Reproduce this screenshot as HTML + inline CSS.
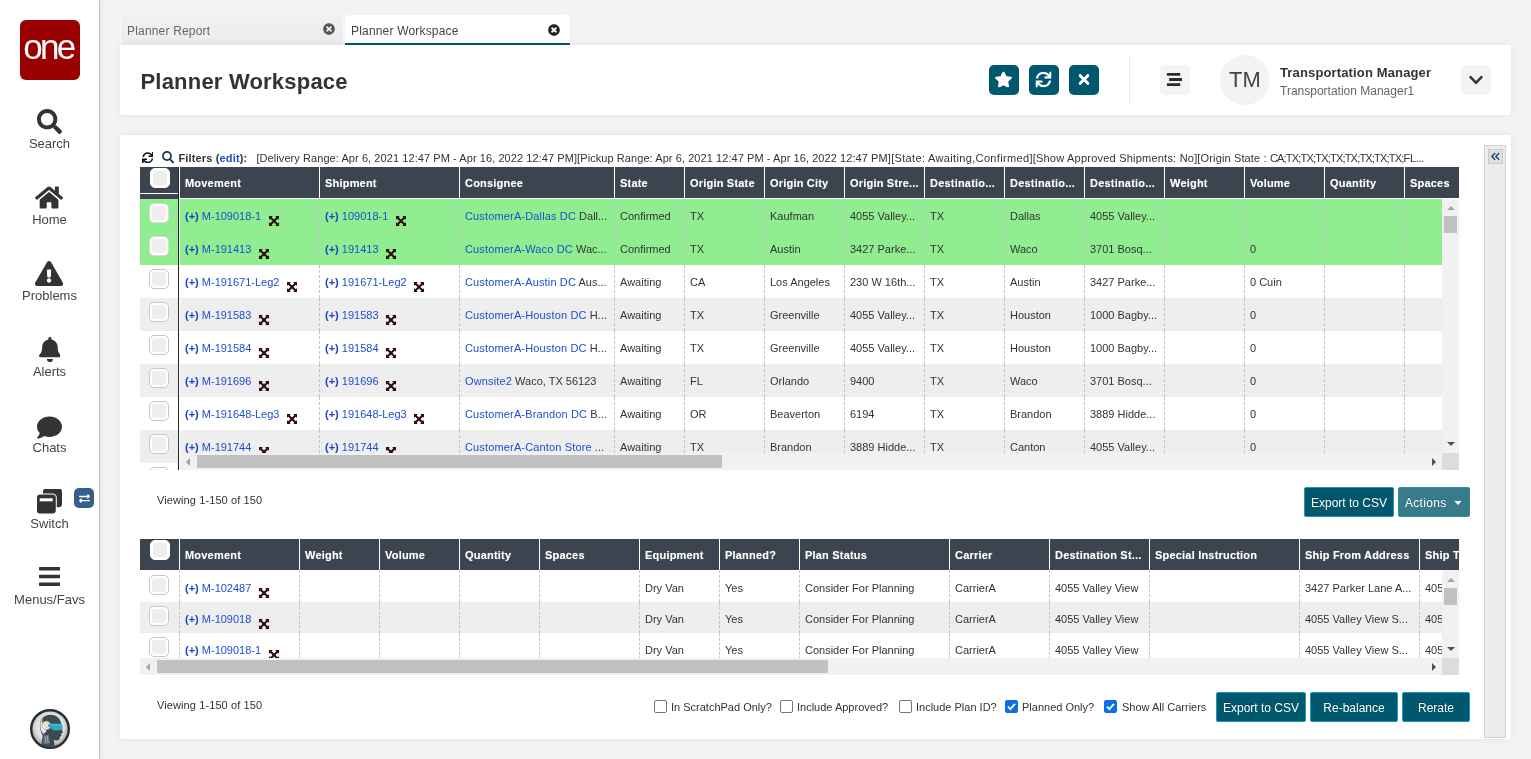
<!DOCTYPE html><html lang="en"><head><meta charset="utf-8"><title>Planner Workspace</title><style>

*{box-sizing:border-box}
html,body{margin:0;padding:0}
body{width:1531px;height:759px;overflow:hidden;background:#f3f3f3;font-family:"Liberation Sans",sans-serif;color:#333;position:relative}
a{color:#1e4ecd;text-decoration:none}
#side,#head,#panel,.tab{will-change:transform}
#side{position:absolute;left:0;top:0;width:100px;height:759px;background:#fff;border-right:1px solid #c4c4c4;box-shadow:2px 0 6px rgba(0,0,0,.06)}
#logo{position:absolute;left:20px;top:20px;width:60px;height:60px;border-radius:6px;background:#990000;color:#fff;font-size:35px;letter-spacing:-2.7px;text-align:center;line-height:54px;text-indent:-3px}
.nav{position:absolute;left:0;width:99px;height:60px;text-align:center}
.nav svg{position:absolute;top:0;left:0;right:0;margin:auto}
.nav span{position:absolute;left:0;right:0;top:27px;font-size:13px;color:#444;line-height:16px}
#badge{position:absolute;left:74px;top:488px;width:20px;height:20px;border-radius:5px;background:#34608a}
#ava{position:absolute;left:30px;top:708.500px}
.tab{position:absolute;top:15px;height:30px;font-size:12px;line-height:30px;color:#666;padding-left:6px;border-radius:5px 5px 0 0;letter-spacing:.18px}
#tab1{left:120px;width:224px;background:linear-gradient(#f1f1f1,#ececec);border:1px solid #f8f8f8;border-bottom:none}
#tab2{left:345px;width:225px;padding-left:6px;padding-top:1px;background:#fff;color:#444;border-bottom:2px solid #00586e}
.tab svg{position:absolute;top:9px}
#tab1 svg{top:7px}
#tab2 svg{top:9px}
#head{position:absolute;left:120px;top:45px;width:1391px;height:70px;background:#fff;box-shadow:0 0 8px rgba(0,0,0,.07);border-radius:0 0 3px 3px}
#title{position:absolute;left:20.500px;top:22px;font-size:22px;font-weight:bold;color:#333;line-height:30px;white-space:nowrap;letter-spacing:.2px}
.hb{position:absolute;top:20px;width:30px;height:30px;border-radius:5px;background:#00586e}
.hb svg{position:absolute;left:0;right:0;top:0;bottom:0;margin:auto}
.gb{background:#f4f4f4}
.hb:not(.gb) svg{transform:translate(-.5px,-.5px)}
#panel{position:absolute;left:120px;top:135px;width:1391px;height:604px;background:#fff;box-shadow:0 0 8px rgba(0,0,0,.07);border-radius:3px}


#panel{font-size:11px}
.abs{position:absolute}
.gh{position:absolute;background:#3c444f;color:#fff;font-weight:bold;font-size:11px;overflow:hidden}
.gh div{position:absolute;top:0;height:100%;padding-left:5px;line-height:33px;border-right:1px solid #fff;white-space:nowrap;overflow:hidden;letter-spacing:.2px;text-shadow:0 0 1px rgba(255,255,255,.4)}
.gb2{position:absolute;overflow:hidden;background:#fff}
.row{position:absolute;left:0;width:100%}
.row.alt{background:#eee}
.row.grn{background:#90ee90}
.row div{position:absolute;top:0;height:100%;padding-left:5px;border-right:1px dashed #c4c4c4;white-space:nowrap;overflow:hidden;color:#333}
.row b{color:#1b3fd0}
.row a.c{letter-spacing:.15px}
.mv{position:relative;top:6px;margin-left:7.500px}
.cb{position:absolute;left:9.200px;width:19.500px;height:19.500px;margin-top:.2px;border:1px solid #c6c6c6;border-radius:5px;background:#fff}
.cb:after{content:"";position:absolute;left:2px;top:2px;right:2px;bottom:2px;background:#eee;border-radius:3px}
.grn .cb{border-color:#d4dcd4}
.hcb{border-color:#fff;left:10px;width:20px;height:20px;margin-top:0}
.btn{position:absolute;height:30px;background:#00586e;border:1px solid #1b98bb;color:#fff;font-size:12px;text-align:center;line-height:28px;padding-top:1px;text-shadow:0 -1px 0 rgba(0,0,0,.25);border-radius:2px;white-space:nowrap}
.sb{position:absolute;background:#f1f1f1}
.th{position:absolute;background:#c1c1c1}
.chk{position:absolute;top:565px;width:13px;height:13px;border:1px solid #767676;border-radius:2px;background:#fff}
.chk.on{background:#0a6fe8;border-color:#0a6fe8}
.lbl{position:absolute;top:564px;line-height:17px;font-size:11px;color:#333;white-space:nowrap}

</style></head><body>
<div id="side"><div id="logo">one</div>
<div class="nav" style="top:108.5px"><svg viewBox="0 0 512 512" width="25" height="25" style="top:0px"><path fill="#333" d="M505 442.7L405.3 343c-4.500-4.500-10.600-7-17-7H372c27.600-35.300 44-79.700 44-128C416 93.100 322.900 0 208 0S0 93.100 0 208s93.100 208 208 208c48.300 0 92.700-16.400 128-44v16.300c0 6.400 2.500 12.500 7 17l99.700 99.700c9.400 9.400 24.600 9.400 33.900 0l28.300-28.300c9.400-9.400 9.400-24.600.100-34zM208 336c-70.700 0-128-57.200-128-128 0-70.700 57.200-128 128-128 70.700 0 128 57.200 128 128 0 70.700-57.200 128-128 128z"/></svg><span>Search</span></div>
<div class="nav" style="top:184.5px"><svg viewBox="0 0 576 512" width="28.1" height="25" style="top:0px"><path fill="#333" d="M280.370 148.260L96 300.110V464a16 16 0 0 0 16 16l112.060-.290a16 16 0 0 0 15.920-16V368a16 16 0 0 1 16-16h64a16 16 0 0 1 16 16v95.640a16 16 0 0 0 16 16.050L464 480a16 16 0 0 0 16-16V300L295.670 148.260a12.190 12.190 0 0 0-15.300 0zM571.600 251.470L488 182.560V44.050a12 12 0 0 0-12-12h-56a12 12 0 0 0-12 12v72.610L318.470 43a48 48 0 0 0-61 0L4.340 251.470a12 12 0 0 0-1.600 16.900l25.500 31A12 12 0 0 0 45.150 301l235.220-193.740a12.190 12.190 0 0 1 15.300 0L530.900 301a12 12 0 0 0 16.900-1.600l25.500-31a12 12 0 0 0-1.700-16.930z"/></svg><span>Home</span></div>
<div class="nav" style="top:260.5px"><svg viewBox="0 0 576 512" width="28.1" height="25" style="top:0px"><path fill="#333" d="M569.517 440.013C587.975 472.007 564.806 512 527.940 512H48.054c-36.937 0-59.999-40.055-41.577-71.987L246.423 23.985c18.467-32.009 64.720-31.951 83.154 0l239.940 416.028zM288 354c-25.405 0-46 20.595-46 46s20.595 46 46 46 46-20.595 46-46-20.595-46-46-46zm-43.673-165.346l7.418 136c.347 6.364 5.609 11.346 11.982 11.346h48.546c6.373 0 11.635-4.982 11.982-11.346l7.418-136c.375-6.874-5.098-12.654-11.982-12.654h-63.383c-6.884 0-12.356 5.780-11.981 12.654z"/></svg><span>Problems</span></div>
<div class="nav" style="top:336.5px"><svg viewBox="0 0 448 512" width="21.9" height="25" style="top:0px"><path fill="#333" d="M224 512c35.320 0 63.970-28.650 63.970-64H160.030c0 35.350 28.650 64 63.970 64zm215.390-149.710c-19.320-20.760-55.470-51.990-55.470-154.290 0-77.700-54.480-139.900-127.940-155.160V32c0-17.670-14.320-32-31.980-32s-31.980 14.330-31.980 32v20.840C118.560 68.100 64.080 130.300 64.080 208c0 102.300-36.150 133.530-55.470 154.290-6 6.450-8.660 14.160-8.610 21.710.110 16.400 12.980 32 32.100 32h383.800c19.120 0 32-15.600 32.100-32 .050-7.550-2.610-15.270-8.610-21.710z"/></svg><span>Alerts</span></div>
<div class="nav" style="top:412.5px"><svg viewBox="0 0 512 512" width="25" height="25" style="top:2.2px"><path fill="#333" d="M256 32C114.600 32 0 125.100 0 240c0 49.600 21.400 95 57 130.700C44.500 421.100 2.700 466 2.200 466.500c-2.200 2.300-2.800 5.700-1.500 8.700S4.800 480 8 480c66.300 0 116-31.800 140.600-51.400 32.700 12.300 69 19.400 107.400 19.400 141.400 0 256-93.100 256-208S397.400 32 256 32z"/></svg><span>Chats</span></div>
<div class="nav" style="top:488.5px"><svg viewBox="0.500 0.700 26 26" width="26" height="26" style="left:0;right:0"><rect x="6.500" y="0" width="19" height="19" rx="3.500" fill="#333"/><rect x="-.700" y="5.300" width="21" height="21" rx="4.200" fill="#fff"/><rect x=".300" y="6.300" width="19" height="19" rx="3.300" fill="#333"/><rect x="3.200" y="10" width="13" height="3" fill="#fff"/></svg><span>Switch</span></div>
<div class="nav" style="top:564.5px"><svg viewBox="0 0 448 512" width="21.9" height="25" style="top:-0.7px"><path fill="#333" d="M16 132h416c8.837 0 16-7.163 16-16V76c0-8.837-7.163-16-16-16H16C7.163 60 0 67.163 0 76v40c0 8.837 7.163 16 16 16zm0 160h416c8.837 0 16-7.163 16-16v-40c0-8.837-7.163-16-16-16H16c-8.837 0-16 7.163-16 16v40c0 8.837 7.163 16 16 16zm0 160h416c8.837 0 16-7.163 16-16v-40c0-8.837-7.163-16-16-16H16c-8.837 0-16 7.163-16 16v40c0 8.837 7.163 16 16 16z"/></svg><span>Menus/Favs</span></div>
<div id="badge"><svg viewBox="0 0 512 512" width="11" height="11" style="position:absolute;left:4.500px;top:4.500px"><path fill="#fff" d="M0 168v-16c0-13.255 10.745-24 24-24h360V80c0-21.367 25.899-32.042 40.971-16.971l80 80c9.372 9.373 9.372 24.569 0 33.941l-80 80C409.956 271.982 384 261.456 384 240v-48H24c-13.255 0-24-10.745-24-24zm488 152H128v-48c0-21.314-25.862-32.080-40.971-16.971l-80 80c-9.372 9.373-9.372 24.569 0 33.941l80 80C102.057 463.997 128 453.437 128 432v-48h360c13.255 0 24-10.745 24-24v-16c0-13.255-10.745-24-24-24z"/></svg></div>
<svg id="ava" viewBox="0 0 40 40" width="40" height="40"><defs><radialGradient id="ag" cx="50%" cy="45%" r="55%"><stop offset="0" stop-color="#fafafa"/><stop offset=".7" stop-color="#dcdcdc"/><stop offset="1" stop-color="#9a9a9a"/></radialGradient><clipPath id="ac"><circle cx="20" cy="20" r="18.300"/></clipPath></defs><circle cx="20" cy="20" r="18.800" fill="url(#ag)" stroke="#262d30" stroke-width="2.400"/><g clip-path="url(#ac)"><path fill="#3c4a52" d="M10 17c-.6-6.500 4-11.300 10.500-11.300 6.300 0 10 4 10.700 9.200l.3 4.600 1.500 4.200-1.800.8.200 2.500-1.300.6-.7 3c-1 1.200-3.400 1-5.600.3l.8 5.600 3 3H9.500l2-5.500 1.200-7.500C11 24 10.200 21 10 17z"/><path fill="#e4eaec" d="M10.300 17c-.2-3.300.8-6 2.600-7.900-.9 2.600-.9 5.300.3 7.600 1.200 2.400 3.300 4 3.300 5.800-1.100.9-2.300 1.500-3.200 2.600C11.500 23 10.500 20 10.300 17z"/><path fill="#5b6a72" d="M13.500 26.500l5.500-1 1.300 9.500h-8z"/><path fill="#26343b" d="M15 27l1 7M17.300 26.600l.8 7.400" stroke="#dfe6e8" stroke-width=".6"/><circle cx="16.400" cy="16.400" r="4.200" fill="#eef2f3" stroke="#b9a777" stroke-width=".8"/><circle cx="16.800" cy="16.400" r="2.100" fill="none" stroke="#c9a75a" stroke-width=".6"/><path fill="#2fa9c6" d="M17.300 16.200l4-1.700 10.400.2c.9 1.900 1 4.300.6 6.400l-8.300.3c-2.300-1.200-4.700-3-6.700-5.200z"/><path fill="#66cfe2" opacity=".6" d="M22 15l9.500.2.300 1.300-10.500-.3z"/></g></svg></div>
<div class="tab" id="tab1">Planner Report<svg viewBox="0 0 512 512" width="12" height="12" style="left:202px"><path fill="#555" d="M256 8C119 8 8 119 8 256s111 248 248 248 248-111 248-248S393 8 256 8zm121.600 313.100c4.700 4.700 4.700 12.300 0 17L338 377.600c-4.700 4.700-12.300 4.700-17 0L256 312l-65.100 65.600c-4.700 4.700-12.300 4.700-17 0L134.400 338c-4.700-4.700-4.700-12.300 0-17l65.600-65-65.600-65.100c-4.700-4.700-4.700-12.300 0-17l39.600-39.600c4.700-4.700 12.300-4.700 17 0l65 65.700 65.100-65.600c4.700-4.700 12.300-4.700 17 0l39.600 39.600c4.700 4.700 4.700 12.300 0 17L312 256l65.600 65.100z"/></svg></div>
<div class="tab" id="tab2">Planner Workspace<svg viewBox="0 0 512 512" width="12" height="12" style="left:203px"><path fill="#222" d="M256 8C119 8 8 119 8 256s111 248 248 248 248-111 248-248S393 8 256 8zm121.600 313.100c4.700 4.700 4.700 12.300 0 17L338 377.600c-4.700 4.700-12.300 4.700-17 0L256 312l-65.100 65.600c-4.700 4.700-12.300 4.700-17 0L134.400 338c-4.700-4.700-4.700-12.300 0-17l65.600-65-65.600-65.100c-4.700-4.700-4.700-12.300 0-17l39.600-39.600c4.700-4.700 12.300-4.700 17 0l65 65.700 65.100-65.600c4.700-4.700 12.300-4.700 17 0l39.600 39.600c4.700 4.700 4.700 12.300 0 17L312 256l65.600 65.100z"/></svg></div>
<div id="head"><div id="title">Planner Workspace</div>
<div class="hb" style="left:869px"><svg viewBox="0 0 576 512" width="18" height="16" style=""><path fill="#fff" d="M259.300 17.800L194 150.200 47.900 171.500c-26.200 3.800-36.700 36.100-17.700 54.600l105.700 103-25 145.500c-4.500 26.300 23.200 46 46.400 33.700L288 439.600l130.700 68.700c23.200 12.200 50.900-7.400 46.400-33.700l-25-145.500 105.700-103c19-18.500 8.500-50.800-17.700-54.600L382 150.200 316.700 17.800c-11.700-23.600-45.600-23.900-57.400 0z"/></svg></div>
<div class="hb" style="left:909px"><svg viewBox="0 0 512 512" width="16" height="16" style=""><path fill="#fff" d="M440.650 12.570l4 82.770A247.160 247.160 0 0 0 255.830 8C134.730 8 33.910 94.920 12.290 209.820A12 12 0 0 0 24.090 224h49.050a12 12 0 0 0 11.670-9.260 175.910 175.910 0 0 1 317-56.940l-101.460-4.860a12 12 0 0 0-12.570 12v47.410a12 12 0 0 0 12 12H500a12 12 0 0 0 12-12V12a12 12 0 0 0-12-12h-47.370a12 12 0 0 0-11.980 12.570zM255.830 432a175.610 175.610 0 0 1-146-77.800l101.800 4.870a12 12 0 0 0 12.570-12v-47.400a12 12 0 0 0-12-12H12a12 12 0 0 0-12 12V500a12 12 0 0 0 12 12h47.350a12 12 0 0 0 12-12.600l-4.150-82.570A247.170 247.170 0 0 0 255.830 504c121.110 0 221.930-86.920 243.550-201.820a12 12 0 0 0-11.800-14.180h-49.050a12 12 0 0 0-11.670 9.260A175.860 175.860 0 0 1 255.830 432z"/></svg></div>
<div class="hb" style="left:949px"><svg viewBox="0 0 352 512" width="11" height="16" style=""><path fill="#fff" d="M242.720 256l100.070-100.070c12.280-12.280 12.280-32.190 0-44.480l-22.240-22.240c-12.280-12.280-32.190-12.280-44.480 0L176 189.280 75.930 89.210c-12.280-12.280-32.190-12.280-44.480 0L9.210 111.450c-12.280 12.280-12.280 32.190 0 44.480L109.280 256 9.210 356.070c-12.280 12.280-12.280 32.190 0 44.480l22.240 22.240c12.280 12.280 32.200 12.280 44.480 0L176 322.720l100.070 100.070c12.280 12.280 32.200 12.280 44.480 0l22.240-22.240c12.280-12.280 12.280-32.190 0-44.480L242.720 256z"/></svg></div>
<div style="position:absolute;left:1009px;top:10px;width:1px;height:50px;background:#eaeaea"></div>
<div class="hb gb" style="left:1040px"><svg viewBox="0 0 30 30" width="30" height="30"><path fill="#2b2b2b" d="M6.900 8.100h13.300v2.700H6.900zM9.200 13.100H22v2.800H9.200zM6.900 18.300h13.300v2.800H6.900z"/></svg></div>
<div style="position:absolute;left:1100px;top:10px;width:50px;height:50px;border-radius:50%;background:#f3f3f3;text-align:center;line-height:50px;font-size:22px;color:#444">TM</div>
<div style="position:absolute;left:1160px;top:20px;font-size:13px;font-weight:bold;color:#333;line-height:16px;white-space:nowrap;letter-spacing:.14px">Transportation Manager</div>
<div style="position:absolute;left:1160px;top:38px;font-size:12px;color:#666;line-height:16px;white-space:nowrap">Transportation Manager1</div>
<div class="hb gb" style="left:1341px"><svg viewBox="0 0 448 512" width="14" height="16" style=""><path fill="#333" d="M207.029 381.476L12.686 187.132c-9.373-9.373-9.373-24.569 0-33.941l22.667-22.667c9.357-9.357 24.522-9.375 33.901-.040L224 284.505l154.745-154.021c9.379-9.335 24.544-9.317 33.901.040l22.667 22.667c9.373 9.373 9.373 24.569 0 33.941L240.971 381.476c-9.373 9.372-24.569 9.372-33.942 0z"/></svg></div>
</div>
<div id="panel">
<svg viewBox="0 0 512 512" width="11.5" height="11.5" style="position:absolute;left:21.80000000000001px;top:16.900000000000006px"><path fill="#111" d="M440.650 12.570l4 82.770A247.160 247.160 0 0 0 255.830 8C134.730 8 33.910 94.920 12.290 209.820A12 12 0 0 0 24.090 224h49.050a12 12 0 0 0 11.670-9.260 175.910 175.910 0 0 1 317-56.940l-101.460-4.860a12 12 0 0 0-12.570 12v47.410a12 12 0 0 0 12 12H500a12 12 0 0 0 12-12V12a12 12 0 0 0-12-12h-47.370a12 12 0 0 0-11.980 12.570zM255.830 432a175.610 175.610 0 0 1-146-77.800l101.800 4.870a12 12 0 0 0 12.570-12v-47.400a12 12 0 0 0-12-12H12a12 12 0 0 0-12 12V500a12 12 0 0 0 12 12h47.350a12 12 0 0 0 12-12.600l-4.150-82.570A247.170 247.170 0 0 0 255.830 504c121.110 0 221.930-86.920 243.550-201.820a12 12 0 0 0-11.800-14.180h-49.050a12 12 0 0 0-11.670 9.260A175.860 175.860 0 0 1 255.830 432z"/></svg>
<svg class="abs" style="left:42px;top:16px" width="13" height="13" viewBox="0 0 13 13"><circle cx="4.950" cy="5" r="4.050" fill="none" stroke="#1b3348" stroke-width="1.700"/><path d="M7.900 8.100 11.100 11.400" stroke="#1b3348" stroke-width="1.900" stroke-linecap="round"/></svg>
<div class="abs" style="left:58.5px;top:15px;line-height:16px;white-space:nowrap;color:#333"><b style="letter-spacing:.15px">Filters (<a href="#">edit</a>):</b> <span style="margin-left:6px" id="ftxt"><span style="letter-spacing:0.073px">[Delivery Range: Apr 6, 2021 12:47 PM - Apr 16, 2022 12:47 PM</span><span style="letter-spacing:0.072px">][Pickup Range: Apr 6, 2021 12:47 PM - Apr 16, 2022 12:47 PM</span><span style="letter-spacing:0.34px">][State: Awaiting,Confirmed</span><span style="letter-spacing:0.22px">][Show Approved Shipments: No</span><span style="letter-spacing:0.14px">][Origin State : </span><span style="letter-spacing:-0.8px">CA;TX;TX;TX;TX;TX;TX;TX;TX;</span><span style="letter-spacing:-0.3px">FL...</span></span></div>
<div class="abs" style="left:20px;top:32px;width:38px;height:32px;background:#3c444f"><div class="cb hcb" style="top:1px"></div><div class="abs" style="left:0;top:26px;width:38px;height:1px;background:#fff"></div></div>
<div class="gb2" style="left:20px;top:64px;width:38px;height:271px">
<div class="row grn" style="top:0px;height:33px"><span class="cb" style="top:4px"></span></div>
<div class="row grn" style="top:33px;height:33px"><span class="cb" style="top:4px"></span></div>
<div class="row " style="top:66px;height:33px"><span class="cb" style="top:4px"></span></div>
<div class="row alt" style="top:99px;height:33px"><span class="cb" style="top:4px"></span></div>
<div class="row " style="top:132px;height:33px"><span class="cb" style="top:4px"></span></div>
<div class="row alt" style="top:165px;height:33px"><span class="cb" style="top:4px"></span></div>
<div class="row " style="top:198px;height:33px"><span class="cb" style="top:4px"></span></div>
<div class="row alt" style="top:231px;height:33px"><span class="cb" style="top:4px"></span></div>
<div class="row " style="top:264px;height:33px"><span class="cb" style="top:4px"></span></div>
</div>
<div class="abs" style="left:58px;top:32px;width:1px;height:303px;background:#222"></div>
<div class="gh" style="left:60px;top:32px;width:1279px;height:31px">
<div style="left:0px;width:140px">Movement</div>
<div style="left:140px;width:140px">Shipment</div>
<div style="left:280px;width:155px">Consignee</div>
<div style="left:435px;width:70px">State</div>
<div style="left:505px;width:80px">Origin State</div>
<div style="left:585px;width:80px">Origin City</div>
<div style="left:665px;width:80px">Origin Stre...</div>
<div style="left:745px;width:80px">Destinatio...</div>
<div style="left:825px;width:80px">Destinatio...</div>
<div style="left:905px;width:80px">Destinatio...</div>
<div style="left:985px;width:80px">Weight</div>
<div style="left:1065px;width:80px">Volume</div>
<div style="left:1145px;width:80px">Quantity</div>
<div style="left:1225px;width:80px">Spaces</div>
</div>
<div class="gb2" style="left:60px;top:64px;width:1262px;height:254px">
<div class="row grn" style="top:0px;height:33px;line-height:35px">
<div style="left:0px;width:140px"><a href="#"><b>(+)</b> M-109018-1</a><svg class="mv" viewBox="0 0 11 11" width="10" height="10"><path fill="#2a0d0d" d="M0 0h4.200L2.900 1.300 5.500 3.900 8.100 1.300 6.800 0H11v4.200L9.700 2.900 7.100 5.500 9.700 8.100 11 6.800V11H6.800l1.300-1.300L5.500 7.100 2.900 9.700 4.200 11H0V6.800l1.300 1.300L3.900 5.500 1.300 2.900 0 4.200z"/></svg></div>
<div style="left:140px;width:140px"><a href="#"><b>(+)</b> 109018-1</a><svg class="mv" viewBox="0 0 11 11" width="10" height="10"><path fill="#2a0d0d" d="M0 0h4.200L2.900 1.300 5.500 3.900 8.100 1.300 6.800 0H11v4.200L9.700 2.900 7.100 5.500 9.700 8.100 11 6.800V11H6.800l1.300-1.300L5.500 7.100 2.900 9.700 4.200 11H0V6.800l1.300 1.300L3.900 5.500 1.300 2.900 0 4.200z"/></svg></div>
<div style="left:280px;width:155px"><a class="c" href="#">CustomerA-Dallas DC</a> Dall...</div>
<div style="left:435px;width:70px">Confirmed</div>
<div style="left:505px;width:80px">TX</div>
<div style="left:585px;width:80px">Kaufman</div>
<div style="left:665px;width:80px">4055 Valley...</div>
<div style="left:745px;width:80px">TX</div>
<div style="left:825px;width:80px">Dallas</div>
<div style="left:905px;width:80px">4055 Valley...</div>
<div style="left:985px;width:80px"></div>
<div style="left:1065px;width:80px"></div>
<div style="left:1145px;width:80px"></div>
<div style="left:1225px;width:80px"></div>
</div>
<div class="row grn" style="top:33px;height:33px;line-height:35px">
<div style="left:0px;width:140px"><a href="#"><b>(+)</b> M-191413</a><svg class="mv" viewBox="0 0 11 11" width="10" height="10"><path fill="#2a0d0d" d="M0 0h4.200L2.900 1.300 5.500 3.900 8.100 1.300 6.800 0H11v4.200L9.700 2.900 7.100 5.500 9.700 8.100 11 6.800V11H6.800l1.300-1.300L5.500 7.100 2.900 9.700 4.200 11H0V6.800l1.300 1.300L3.900 5.500 1.300 2.900 0 4.200z"/></svg></div>
<div style="left:140px;width:140px"><a href="#"><b>(+)</b> 191413</a><svg class="mv" viewBox="0 0 11 11" width="10" height="10"><path fill="#2a0d0d" d="M0 0h4.200L2.900 1.300 5.500 3.900 8.100 1.300 6.800 0H11v4.200L9.700 2.900 7.100 5.500 9.700 8.100 11 6.800V11H6.800l1.300-1.300L5.500 7.100 2.900 9.700 4.200 11H0V6.800l1.300 1.300L3.900 5.500 1.300 2.900 0 4.200z"/></svg></div>
<div style="left:280px;width:155px"><a class="c" href="#">CustomerA-Waco DC</a> Wac...</div>
<div style="left:435px;width:70px">Confirmed</div>
<div style="left:505px;width:80px">TX</div>
<div style="left:585px;width:80px">Austin</div>
<div style="left:665px;width:80px">3427 Parke...</div>
<div style="left:745px;width:80px">TX</div>
<div style="left:825px;width:80px">Waco</div>
<div style="left:905px;width:80px">3701 Bosq...</div>
<div style="left:985px;width:80px"></div>
<div style="left:1065px;width:80px">0</div>
<div style="left:1145px;width:80px"></div>
<div style="left:1225px;width:80px"></div>
</div>
<div class="row " style="top:66px;height:33px;line-height:35px">
<div style="left:0px;width:140px"><a href="#"><b>(+)</b> M-191671-Leg2</a><svg class="mv" viewBox="0 0 11 11" width="10" height="10"><path fill="#2a0d0d" d="M0 0h4.200L2.900 1.300 5.500 3.900 8.100 1.300 6.800 0H11v4.200L9.700 2.900 7.100 5.500 9.700 8.100 11 6.800V11H6.800l1.300-1.300L5.500 7.100 2.900 9.700 4.200 11H0V6.800l1.300 1.300L3.900 5.500 1.300 2.900 0 4.200z"/></svg></div>
<div style="left:140px;width:140px"><a href="#"><b>(+)</b> 191671-Leg2</a><svg class="mv" viewBox="0 0 11 11" width="10" height="10"><path fill="#2a0d0d" d="M0 0h4.200L2.900 1.300 5.500 3.900 8.100 1.300 6.800 0H11v4.200L9.700 2.900 7.100 5.500 9.700 8.100 11 6.800V11H6.800l1.300-1.300L5.500 7.100 2.900 9.700 4.200 11H0V6.800l1.300 1.300L3.900 5.500 1.300 2.900 0 4.200z"/></svg></div>
<div style="left:280px;width:155px"><a class="c" href="#">CustomerA-Austin DC</a> Aus...</div>
<div style="left:435px;width:70px">Awaiting</div>
<div style="left:505px;width:80px">CA</div>
<div style="left:585px;width:80px">Los Angeles</div>
<div style="left:665px;width:80px">230 W 16th...</div>
<div style="left:745px;width:80px">TX</div>
<div style="left:825px;width:80px">Austin</div>
<div style="left:905px;width:80px">3427 Parke...</div>
<div style="left:985px;width:80px"></div>
<div style="left:1065px;width:80px">0 Cuin</div>
<div style="left:1145px;width:80px"></div>
<div style="left:1225px;width:80px"></div>
</div>
<div class="row alt" style="top:99px;height:33px;line-height:35px">
<div style="left:0px;width:140px"><a href="#"><b>(+)</b> M-191583</a><svg class="mv" viewBox="0 0 11 11" width="10" height="10"><path fill="#2a0d0d" d="M0 0h4.200L2.900 1.300 5.500 3.900 8.100 1.300 6.800 0H11v4.200L9.700 2.900 7.100 5.500 9.700 8.100 11 6.800V11H6.800l1.300-1.300L5.500 7.100 2.900 9.700 4.200 11H0V6.800l1.300 1.300L3.900 5.500 1.300 2.900 0 4.200z"/></svg></div>
<div style="left:140px;width:140px"><a href="#"><b>(+)</b> 191583</a><svg class="mv" viewBox="0 0 11 11" width="10" height="10"><path fill="#2a0d0d" d="M0 0h4.200L2.900 1.300 5.500 3.900 8.100 1.300 6.800 0H11v4.200L9.700 2.900 7.100 5.500 9.700 8.100 11 6.800V11H6.800l1.300-1.300L5.500 7.100 2.900 9.700 4.200 11H0V6.800l1.300 1.300L3.900 5.500 1.300 2.900 0 4.200z"/></svg></div>
<div style="left:280px;width:155px"><a class="c" href="#">CustomerA-Houston DC</a> H...</div>
<div style="left:435px;width:70px">Awaiting</div>
<div style="left:505px;width:80px">TX</div>
<div style="left:585px;width:80px">Greenville</div>
<div style="left:665px;width:80px">4055 Valley...</div>
<div style="left:745px;width:80px">TX</div>
<div style="left:825px;width:80px">Houston</div>
<div style="left:905px;width:80px">1000 Bagby...</div>
<div style="left:985px;width:80px"></div>
<div style="left:1065px;width:80px">0</div>
<div style="left:1145px;width:80px"></div>
<div style="left:1225px;width:80px"></div>
</div>
<div class="row " style="top:132px;height:33px;line-height:35px">
<div style="left:0px;width:140px"><a href="#"><b>(+)</b> M-191584</a><svg class="mv" viewBox="0 0 11 11" width="10" height="10"><path fill="#2a0d0d" d="M0 0h4.200L2.900 1.300 5.500 3.900 8.100 1.300 6.800 0H11v4.200L9.700 2.900 7.100 5.500 9.700 8.100 11 6.800V11H6.800l1.300-1.300L5.500 7.100 2.900 9.700 4.200 11H0V6.800l1.300 1.300L3.900 5.500 1.300 2.900 0 4.200z"/></svg></div>
<div style="left:140px;width:140px"><a href="#"><b>(+)</b> 191584</a><svg class="mv" viewBox="0 0 11 11" width="10" height="10"><path fill="#2a0d0d" d="M0 0h4.200L2.900 1.300 5.500 3.900 8.100 1.300 6.800 0H11v4.200L9.700 2.900 7.100 5.500 9.700 8.100 11 6.800V11H6.800l1.300-1.300L5.500 7.100 2.900 9.700 4.200 11H0V6.800l1.300 1.300L3.900 5.500 1.300 2.900 0 4.200z"/></svg></div>
<div style="left:280px;width:155px"><a class="c" href="#">CustomerA-Houston DC</a> H...</div>
<div style="left:435px;width:70px">Awaiting</div>
<div style="left:505px;width:80px">TX</div>
<div style="left:585px;width:80px">Greenville</div>
<div style="left:665px;width:80px">4055 Valley...</div>
<div style="left:745px;width:80px">TX</div>
<div style="left:825px;width:80px">Houston</div>
<div style="left:905px;width:80px">1000 Bagby...</div>
<div style="left:985px;width:80px"></div>
<div style="left:1065px;width:80px">0</div>
<div style="left:1145px;width:80px"></div>
<div style="left:1225px;width:80px"></div>
</div>
<div class="row alt" style="top:165px;height:33px;line-height:35px">
<div style="left:0px;width:140px"><a href="#"><b>(+)</b> M-191696</a><svg class="mv" viewBox="0 0 11 11" width="10" height="10"><path fill="#2a0d0d" d="M0 0h4.200L2.900 1.300 5.500 3.900 8.100 1.300 6.800 0H11v4.200L9.700 2.900 7.100 5.500 9.700 8.100 11 6.800V11H6.800l1.300-1.300L5.500 7.100 2.900 9.700 4.200 11H0V6.800l1.300 1.300L3.900 5.500 1.300 2.900 0 4.200z"/></svg></div>
<div style="left:140px;width:140px"><a href="#"><b>(+)</b> 191696</a><svg class="mv" viewBox="0 0 11 11" width="10" height="10"><path fill="#2a0d0d" d="M0 0h4.200L2.900 1.300 5.500 3.900 8.100 1.300 6.800 0H11v4.200L9.700 2.900 7.100 5.500 9.700 8.100 11 6.800V11H6.800l1.300-1.300L5.500 7.100 2.900 9.700 4.200 11H0V6.800l1.300 1.300L3.900 5.500 1.300 2.900 0 4.200z"/></svg></div>
<div style="left:280px;width:155px"><a class="c" href="#">Ownsite2</a> Waco, TX 56123</div>
<div style="left:435px;width:70px">Awaiting</div>
<div style="left:505px;width:80px">FL</div>
<div style="left:585px;width:80px">Orlando</div>
<div style="left:665px;width:80px">9400</div>
<div style="left:745px;width:80px">TX</div>
<div style="left:825px;width:80px">Waco</div>
<div style="left:905px;width:80px">3701 Bosq...</div>
<div style="left:985px;width:80px"></div>
<div style="left:1065px;width:80px">0</div>
<div style="left:1145px;width:80px"></div>
<div style="left:1225px;width:80px"></div>
</div>
<div class="row " style="top:198px;height:33px;line-height:35px">
<div style="left:0px;width:140px"><a href="#"><b>(+)</b> M-191648-Leg3</a><svg class="mv" viewBox="0 0 11 11" width="10" height="10"><path fill="#2a0d0d" d="M0 0h4.200L2.900 1.300 5.500 3.900 8.100 1.300 6.800 0H11v4.200L9.700 2.900 7.100 5.500 9.700 8.100 11 6.800V11H6.800l1.300-1.300L5.500 7.100 2.900 9.700 4.200 11H0V6.800l1.300 1.300L3.900 5.500 1.300 2.900 0 4.200z"/></svg></div>
<div style="left:140px;width:140px"><a href="#"><b>(+)</b> 191648-Leg3</a><svg class="mv" viewBox="0 0 11 11" width="10" height="10"><path fill="#2a0d0d" d="M0 0h4.200L2.900 1.300 5.500 3.900 8.100 1.300 6.800 0H11v4.200L9.700 2.900 7.100 5.500 9.700 8.100 11 6.800V11H6.800l1.300-1.300L5.500 7.100 2.900 9.700 4.200 11H0V6.800l1.300 1.300L3.900 5.500 1.300 2.900 0 4.200z"/></svg></div>
<div style="left:280px;width:155px"><a class="c" href="#">CustomerA-Brandon DC</a> B...</div>
<div style="left:435px;width:70px">Awaiting</div>
<div style="left:505px;width:80px">OR</div>
<div style="left:585px;width:80px">Beaverton</div>
<div style="left:665px;width:80px">6194</div>
<div style="left:745px;width:80px">TX</div>
<div style="left:825px;width:80px">Brandon</div>
<div style="left:905px;width:80px">3889 Hidde...</div>
<div style="left:985px;width:80px"></div>
<div style="left:1065px;width:80px">0</div>
<div style="left:1145px;width:80px"></div>
<div style="left:1225px;width:80px"></div>
</div>
<div class="row alt" style="top:231px;height:33px;line-height:35px">
<div style="left:0px;width:140px"><a href="#"><b>(+)</b> M-191744</a><svg class="mv" viewBox="0 0 11 11" width="10" height="10"><path fill="#2a0d0d" d="M0 0h4.200L2.900 1.300 5.500 3.900 8.100 1.300 6.800 0H11v4.200L9.700 2.900 7.100 5.500 9.700 8.100 11 6.800V11H6.800l1.300-1.300L5.500 7.100 2.900 9.700 4.200 11H0V6.800l1.300 1.300L3.900 5.500 1.300 2.900 0 4.200z"/></svg></div>
<div style="left:140px;width:140px"><a href="#"><b>(+)</b> 191744</a><svg class="mv" viewBox="0 0 11 11" width="10" height="10"><path fill="#2a0d0d" d="M0 0h4.200L2.900 1.300 5.500 3.900 8.100 1.300 6.800 0H11v4.200L9.700 2.900 7.100 5.500 9.700 8.100 11 6.800V11H6.800l1.300-1.300L5.500 7.100 2.900 9.700 4.200 11H0V6.800l1.300 1.300L3.900 5.500 1.300 2.900 0 4.200z"/></svg></div>
<div style="left:280px;width:155px"><a class="c" href="#">CustomerA-Canton Store</a> ...</div>
<div style="left:435px;width:70px">Awaiting</div>
<div style="left:505px;width:80px">TX</div>
<div style="left:585px;width:80px">Brandon</div>
<div style="left:665px;width:80px">3889 Hidde...</div>
<div style="left:745px;width:80px">TX</div>
<div style="left:825px;width:80px">Canton</div>
<div style="left:905px;width:80px">4055 Valley...</div>
<div style="left:985px;width:80px"></div>
<div style="left:1065px;width:80px">0</div>
<div style="left:1145px;width:80px"></div>
<div style="left:1225px;width:80px"></div>
</div>
</div>
<div class="sb" style="left:1322px;top:64px;width:17px;height:254px"></div>
<div class="th" style="left:1324px;top:81px;width:13px;height:17px"></div>
<div class="sb" style="left:60px;top:318px;width:1262px;height:17px"></div>
<div class="th" style="left:77px;top:320px;width:525px;height:13px"></div>
<div class="abs" style="left:1322px;top:318px;width:17px;height:17px;background:#dcdcdc"></div>
<svg class="abs" style="left:1325.5px;top:67.69999999999999px" width="10" height="10" viewBox="-5 -5 10 10"><polygon fill="#a3a3a3" points="-4,2 4,2 0,-2"/></svg>
<svg class="abs" style="left:1325.5px;top:303.5px" width="10" height="10" viewBox="-5 -5 10 10"><polygon fill="#505050" points="-4,-2 4,-2 0,2"/></svg>
<svg class="abs" style="left:63px;top:321.5px" width="10" height="10" viewBox="-5 -5 10 10"><polygon fill="#a3a3a3" points="2,-4 2,4 -2,0"/></svg>
<svg class="abs" style="left:1309px;top:321.5px" width="10" height="10" viewBox="-5 -5 10 10"><polygon fill="#505050" points="-2,-4 -2,4 2,0"/></svg>
<div class="abs" style="left:37px;top:357px;line-height:16px;color:#333;letter-spacing:.1px">Viewing 1-150 of 150</div>
<div class="btn" style="left:1184px;top:352px;width:90px">Export to CSV</div>
<div class="btn" style="left:1278px;top:352px;width:72px;background:#387c8c;border-color:#2f8ea3;text-align:left;padding-left:6px;letter-spacing:.3px">Actions<svg class="abs" style="left:55px;top:12.500px" width="8" height="5" viewBox="0 0 8 5"><polygon fill="#fff" points="0.300,0 7.700,0 4,3.900"/></svg></div>
<div class="gh" style="left:20px;top:404px;width:1319px;height:31px">
<div style="left:0px;width:40px"><span class="cb hcb" style="top:1px"></span></div>
<div style="left:40px;width:120px">Movement</div>
<div style="left:160px;width:80px">Weight</div>
<div style="left:240px;width:80px">Volume</div>
<div style="left:320px;width:80px">Quantity</div>
<div style="left:400px;width:100px">Spaces</div>
<div style="left:500px;width:80px">Equipment</div>
<div style="left:580px;width:80px">Planned?</div>
<div style="left:660px;width:150px">Plan Status</div>
<div style="left:810px;width:100px">Carrier</div>
<div style="left:910px;width:100px">Destination St...</div>
<div style="left:1010px;width:150px">Special Instruction</div>
<div style="left:1160px;width:120px">Ship From Address</div>
<div style="left:1280px;width:120px">Ship To Address</div>
</div>
<div class="gb2" style="left:20px;top:435px;width:1302px;height:88px">
<div class="row " style="top:0px;height:32px;line-height:37px">
<div style="left:0px;width:40px"><span class="cb" style="top:5px"></span></div>
<div style="left:40px;width:120px"><a href="#"><b>(+)</b> M-102487</a><svg class="mv" viewBox="0 0 11 11" width="10" height="10"><path fill="#2a0d0d" d="M0 0h4.200L2.900 1.300 5.500 3.900 8.100 1.300 6.800 0H11v4.200L9.700 2.900 7.100 5.500 9.700 8.100 11 6.800V11H6.800l1.300-1.300L5.500 7.100 2.900 9.700 4.200 11H0V6.800l1.300 1.300L3.900 5.500 1.300 2.900 0 4.200z"/></svg></div>
<div style="left:160px;width:80px"></div>
<div style="left:240px;width:80px"></div>
<div style="left:320px;width:80px"></div>
<div style="left:400px;width:100px"></div>
<div style="left:500px;width:80px">Dry Van</div>
<div style="left:580px;width:80px">Yes</div>
<div style="left:660px;width:150px">Consider For Planning</div>
<div style="left:810px;width:100px">CarrierA</div>
<div style="left:910px;width:100px">4055 Valley View</div>
<div style="left:1010px;width:150px"></div>
<div style="left:1160px;width:120px">3427 Parker Lane A...</div>
<div style="left:1280px;width:120px">4055 Valley View</div>
</div>
<div class="row alt" style="top:32px;height:31px;line-height:35px">
<div style="left:0px;width:40px"><span class="cb" style="top:4px"></span></div>
<div style="left:40px;width:120px"><a href="#"><b>(+)</b> M-109018</a><svg class="mv" viewBox="0 0 11 11" width="10" height="10"><path fill="#2a0d0d" d="M0 0h4.200L2.900 1.300 5.500 3.900 8.100 1.300 6.800 0H11v4.200L9.700 2.900 7.100 5.500 9.700 8.100 11 6.800V11H6.800l1.300-1.300L5.500 7.100 2.900 9.700 4.200 11H0V6.800l1.300 1.300L3.900 5.500 1.300 2.900 0 4.200z"/></svg></div>
<div style="left:160px;width:80px"></div>
<div style="left:240px;width:80px"></div>
<div style="left:320px;width:80px"></div>
<div style="left:400px;width:100px"></div>
<div style="left:500px;width:80px">Dry Van</div>
<div style="left:580px;width:80px">Yes</div>
<div style="left:660px;width:150px">Consider For Planning</div>
<div style="left:810px;width:100px">CarrierA</div>
<div style="left:910px;width:100px">4055 Valley View</div>
<div style="left:1010px;width:150px"></div>
<div style="left:1160px;width:120px">4055 Valley View S...</div>
<div style="left:1280px;width:120px">4055 Valley View</div>
</div>
<div class="row " style="top:63px;height:31px;line-height:35px">
<div style="left:0px;width:40px"><span class="cb" style="top:4px"></span></div>
<div style="left:40px;width:120px"><a href="#"><b>(+)</b> M-109018-1</a><svg class="mv" viewBox="0 0 11 11" width="10" height="10"><path fill="#2a0d0d" d="M0 0h4.200L2.900 1.300 5.500 3.900 8.100 1.300 6.800 0H11v4.200L9.700 2.900 7.100 5.500 9.700 8.100 11 6.800V11H6.800l1.300-1.300L5.500 7.100 2.900 9.700 4.200 11H0V6.800l1.300 1.300L3.900 5.500 1.300 2.900 0 4.200z"/></svg></div>
<div style="left:160px;width:80px"></div>
<div style="left:240px;width:80px"></div>
<div style="left:320px;width:80px"></div>
<div style="left:400px;width:100px"></div>
<div style="left:500px;width:80px">Dry Van</div>
<div style="left:580px;width:80px">Yes</div>
<div style="left:660px;width:150px">Consider For Planning</div>
<div style="left:810px;width:100px">CarrierA</div>
<div style="left:910px;width:100px">4055 Valley View</div>
<div style="left:1010px;width:150px"></div>
<div style="left:1160px;width:120px">4055 Valley View S...</div>
<div style="left:1280px;width:120px">4055 Valley View</div>
</div>
</div>
<div class="sb" style="left:1322px;top:435px;width:17px;height:88px"></div>
<div class="th" style="left:1324px;top:453px;width:13px;height:17px"></div>
<div class="sb" style="left:20px;top:523px;width:1302px;height:17px"></div>
<div class="th" style="left:37px;top:525px;width:671px;height:13px"></div>
<div class="abs" style="left:1322px;top:523px;width:17px;height:17px;background:#dcdcdc"></div>
<svg class="abs" style="left:1325.5px;top:439.70000000000005px" width="10" height="10" viewBox="-5 -5 10 10"><polygon fill="#a3a3a3" points="-4,2 4,2 0,-2"/></svg>
<svg class="abs" style="left:1325.5px;top:509px" width="10" height="10" viewBox="-5 -5 10 10"><polygon fill="#505050" points="-4,-2 4,-2 0,2"/></svg>
<svg class="abs" style="left:22.5px;top:526.5px" width="10" height="10" viewBox="-5 -5 10 10"><polygon fill="#a3a3a3" points="2,-4 2,4 -2,0"/></svg>
<svg class="abs" style="left:1309px;top:526.5px" width="10" height="10" viewBox="-5 -5 10 10"><polygon fill="#505050" points="-2,-4 -2,4 2,0"/></svg>
<div class="abs" style="left:37px;top:562px;line-height:16px;color:#333;letter-spacing:.1px">Viewing 1-150 of 150</div>
<div class="chk" style="left:534px"></div><div class="lbl" style="left:551px">In ScratchPad Only?</div>
<div class="chk" style="left:660px"></div><div class="lbl" style="left:677px">Include Approved?</div>
<div class="chk" style="left:779px"></div><div class="lbl" style="left:796px">Include Plan ID?</div>
<div class="chk on" style="left:885px"><svg class="abs" style="left:0;top:0" width="11" height="11" viewBox="0 0 11 11"><path d="M2 5.700 4.400 8.200 9 2.800" fill="none" stroke="#fff" stroke-width="1.800"/></svg></div><div class="lbl" style="left:902px">Planned Only?</div>
<div class="chk on" style="left:984px"><svg class="abs" style="left:0;top:0" width="11" height="11" viewBox="0 0 11 11"><path d="M2 5.700 4.400 8.200 9 2.800" fill="none" stroke="#fff" stroke-width="1.800"/></svg></div><div class="lbl" style="left:1002px">Show All Carriers</div>
<div class="btn" style="left:1096px;top:557px;width:90px">Export to CSV</div>
<div class="btn" style="left:1190px;top:557px;width:88px">Re-balance</div>
<div class="btn" style="left:1282px;top:557px;width:68px">Rerate</div>
<div class="abs" style="left:1364px;top:10px;width:22px;height:593px;background:#ececec;border:1px solid #d2d2d2"><div class="abs" style="left:3px;top:3px;width:15px;height:15px;background:#e0e0e0;border:1px solid #c9c9c9"><svg class="abs" style="left:0;top:0" width="13" height="13" viewBox="0 0 13 13"><path d="M6.200 3 2.800 6.400 6.200 9.800M10.200 3 6.800 6.400 10.200 9.800" fill="none" stroke="#1d4468" stroke-width="1.400"/></svg></div></div>
</div>
</body></html>
